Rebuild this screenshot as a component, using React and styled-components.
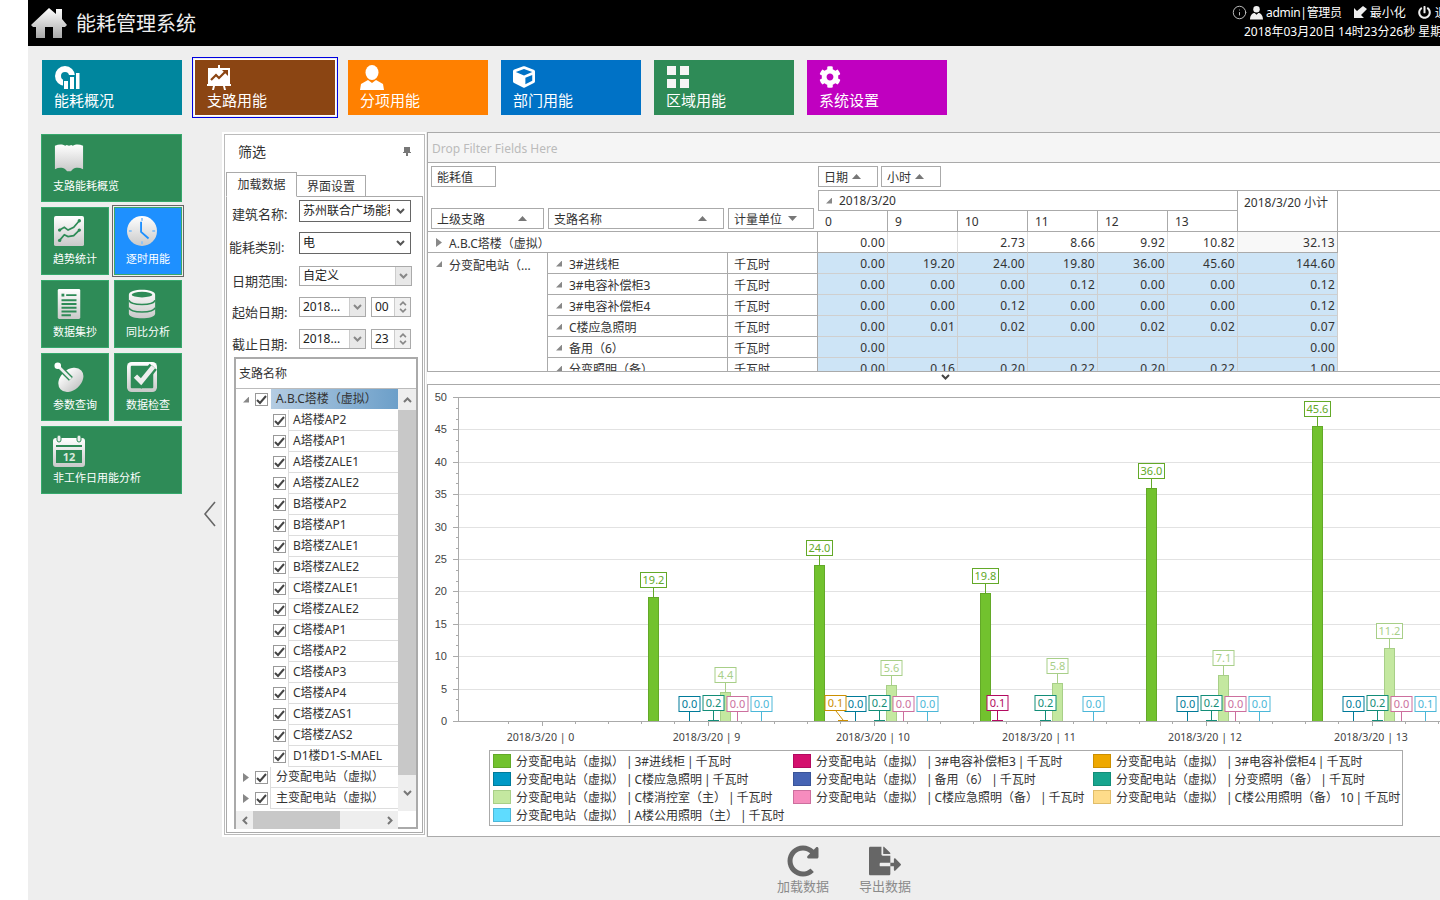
import React from 'react';
import styled, { createGlobalStyle, css } from 'styled-components';
import { FaCog, FaCube, FaRedoAlt, FaFileExport, FaPowerOff } from 'react-icons/fa';
import { Info } from 'lucide-react';

const FONT = '"Noto Sans", "Noto Sans CJK SC", sans-serif';
const TILE_GREEN = '#2e8b57';

const GlobalStyle = createGlobalStyle`
  html, body {
    margin: 0;
    width: 1440px;
    height: 900px;
    overflow: hidden;
    background: #fff;
    font-family: ${FONT};
  }
  * { box-sizing: border-box; }
`;

const Shell = styled.div`
  margin-left: 28px;
  width: 1444px;
  height: 900px;
  overflow: hidden;
  background: #eee;
`;

/* header */
const Header = styled.header`
  height: 46px;
  background: #000;
  display: flex;
  align-items: center;
  color: #fff;
`;

const HomeIcon = styled.svg`
  width: 36px;
  height: 32px;
  margin: 0 9px 0 3px;
`;

const AppTitle = styled.h1`
  margin: 0 0 2px;
  font-size: 20px;
  font-weight: 400;
  color: #eee;
`;

const HeaderRight = styled.div`
  margin-left: auto;
  width: 240px;
  height: 46px;
  font-size: 12px;
  white-space: nowrap;
`;

const UserLine = styled.div`
  display: flex;
  align-items: center;
  height: 23px;
  padding-top: 1px;
`;

const UserItem = styled.span`
  display: flex;
  align-items: center;
  gap: 3px;
  margin-right: ${p => p.$mr || 0}px;
`;

const UserName = styled.span`
  letter-spacing: -0.3px;
`;

const DateLine = styled.div`
  padding-left: 12px;
  line-height: 17px;
`;

/* top nav */
const Nav = styled.nav`
  display: flex;
  gap: 13px;
  padding: 14px 0 17px 14px;
`;

const NavTile = styled.div`
  width: 140px;
  height: 55px;
  padding: 5px 12px 0;
  background: ${p => p.$bg};
  color: #fff;
  font-size: 15px;
  line-height: 20px;
  ${p => p.$active && css`
    box-shadow: 0 0 0 1px #fff;
    outline: 1px solid #0000e0;
    outline-offset: 2px;
  `}
`;

const NavIcon = styled.div`
  height: 24px;
  display: flex;
  align-items: center;
  margin-bottom: 1px;
  font-size: 22px;
`;

/* body */
const Body = styled.div`
  display: flex;
  height: 768px;
  padding-left: 13px;
`;

const Sidebar = styled.aside`
  flex: none;
  margin-top: 2px;
  width: 141px;
  display: grid;
  grid-template-columns: 68px 68px;
  grid-auto-rows: 68px;
  gap: 5px;
`;

const SideTile = styled.div`
  grid-column: ${p => (p.$wide ? 'span 2' : 'auto')};
  display: flex;
  flex-direction: column;
  justify-content: space-between;
  padding: 8px 0 8px 11px;
  background: ${p => (p.$active ? '#1e90ff' : TILE_GREEN)};
  border: 1px solid #36a86c;
  color: #fff;
  font-size: 11px;
  line-height: 14px;
  ${p => p.$active && css`
    outline: 1px solid #666;
    outline-offset: 1px;
  `}
`;

const SideIcon = styled.svg`
  width: 30px;
  height: 30px;
  margin-left: 1px;
  display: block;
`;

const Handle = styled.div`
  flex: none;
  width: 40px;
  padding: 369px 0 0 21px;
`;

/* filter panel */
const FilterPanel = styled.section`
  flex: none;
  width: 204px;
  height: 705px;
  padding: 2px 1px 2px 2px;
  background: #fff;
`;

const FilterFrame = styled.div`
  height: 100%;
  border: 1px solid #bbb;
  display: flex;
  flex-direction: column;
`;

const FilterTitle = styled.div`
  flex: none;
  height: 36px;
  display: flex;
  align-items: center;
  justify-content: space-between;
  padding: 0 13px 4px 13px;
  font-size: 14px;
  color: #333;
`;

const TabBar = styled.div`
  flex: none;
  display: flex;
  align-items: flex-end;
  height: 25px;
  margin-left: 1px;
`;

const Tab = styled.div`
  height: ${p => (p.$active ? 25 : 22)}px;
  width: ${p => (p.$active ? 71 : 69)}px;
  margin-bottom: -1px;
  border: 1px solid #aaa;
  border-bottom-color: ${p => (p.$active ? '#fff' : '#aaa')};
  border-left-width: ${p => (p.$active ? 1 : 0)}px;
  background: #fff;
  position: relative;
  text-align: center;
  font-size: 12px;
  line-height: ${p => (p.$active ? 24 : 22)}px;
  color: #333;
`;

const TabBody = styled.div`
  flex: 1;
  margin: 0 1px 1px 1px;
  padding-top: 3px;
  border: 1px solid #aaa;
`;

const FormRow = styled.div`
  display: flex;
  align-items: flex-start;
  height: ${p => p.$h}px;
  margin-top: ${p => p.$top || 0}px;
`;

const FormLabel = styled.label`
  flex: none;
  width: 72px;
  margin-top: ${p => p.$drop || 5}px;
  padding-left: ${p => p.$indent}px;
  font-size: 13px;
  line-height: 20px;
  color: #333;
  white-space: nowrap;
`;

const Control = styled.div`
  flex: none;
  display: flex;
  width: ${p => p.$w}px;
  height: 100%;
  margin-left: ${p => p.$ml || 0}px;
  background: #fff;
  border: 1px solid ${p => (p.$dark ? '#666' : '#aaa')};
`;

const ControlText = styled.div`
  flex: 1;
  min-width: 0;
  overflow: hidden;
  white-space: nowrap;
  padding-left: 3px;
  font-size: 12px;
  line-height: ${p => (p.$dark ? 20 : 18)}px;
  color: #222;
`;

const ControlButton = styled.div`
  flex: none;
  width: ${p => p.$w}px;
  display: flex;
  flex-direction: column;
  align-items: center;
  justify-content: center;
  gap: 2px;
  background: ${p => p.$bg || 'transparent'};
  border-left: ${p => (p.$bg ? '1px solid #ccc' : 'none')};
`;

const Glyph = styled.svg`
  display: block;
  flex: none;
`;

const ListBox = styled.div`
  width: 184px;
  height: 472px;
  margin: 8px 0 0 7px;
  border: 2px solid #aaa;
`;

const ListHead = styled.div`
  height: 30px;
  padding-left: 3px;
  border-bottom: 1px solid #bbb;
  font-size: 12px;
  line-height: 29px;
  color: #333;
`;

const TreeArea = styled.div`
  display: flex;
  height: 422px;
`;

const TreeRows = styled.div`
  width: 162px;
  overflow: hidden;
`;

const TreeRow = styled.div`
  display: flex;
  align-items: center;
  height: 21px;
  padding-left: ${p => (p.$child ? 37 : 7)}px;
`;

const TreeText = styled.div`
  flex: 1;
  height: 21px;
  margin-left: 2px;
  padding-left: ${p => (p.$child ? 4 : 5)}px;
  border-left: 1px solid #ddd;
  border-bottom: 1px solid #ddd;
  font-size: 12px;
  line-height: 20px;
  color: #333;
  white-space: nowrap;
  ${p => p.$selected && css`
    background: linear-gradient(90deg, #b4cce2, #6c9fc9);
    border-color: #fff;
  `}
`;

const CheckBox = styled.span`
  flex: none;
  width: 13px;
  height: 13px;
  border: 1px solid #999;
  background: #fff;
  display: flex;
  align-items: center;
  justify-content: center;
`;

const VScroll = styled.div`
  width: 18px;
  display: flex;
  flex-direction: column;
  background: #eee;
`;

const ScrollArrow = styled.div`
  flex: none;
  width: ${p => (p.$w ? `${p.$w}px` : 'auto')};
  height: ${p => p.$h}px;
  display: flex;
  align-items: center;
  justify-content: center;
`;

const VThumb = styled.div`
  flex: none;
  height: 365px;
  background: #c8c8c8;
`;

const HScrollRow = styled.div`
  display: flex;
  height: 18px;
`;

const HScroll = styled.div`
  width: 162px;
  display: flex;
  align-items: center;
  background: #eee;
`;

const HThumb = styled.div`
  width: 87px;
  height: 100%;
  margin-right: auto;
  background: #c8c8c8;
`;

/* main column */
const Main = styled.main`
  flex: 1;
  min-width: 0;
  margin-left: 1px;
`;

const MainSheet = styled.div`
  height: 705px;
  background: #fff;
  display: flex;
  flex-direction: column;
`;

const Pivot = styled.section`
  flex: none;
  height: 240px;
  overflow: hidden;
  border-top: 1px solid #aaa;
  border-bottom: 1px solid #aaa;
  border-left: 1px solid #aaa;
`;

const DropBar = styled.div`
  height: 30px;
  padding-left: 4px;
  background: #f5f5f5;
  border-bottom: 1px solid #aaa;
  font-size: 12px;
  line-height: 31px;
  color: #bbb;
`;

const FieldRow = styled.div`
  display: flex;
  align-items: flex-start;
  height: 27px;
  padding: 3px 0 0 3px;
`;

const FieldButton = styled.div`
  flex: none;
  display: flex;
  align-items: center;
  justify-content: space-between;
  width: ${p => p.$w}px;
  height: ${p => p.$h || 21}px;
  margin-left: ${p => p.$ml || 0}px;
  padding: 0 ${p => (p.$plain ? 0 : 16)}px 0 5px;
  border: 1px solid #aaa;
  background: #fff;
  font-size: 12px;
  color: #333;
`;

const Sort = styled.i`
  width: 9px;
  height: 5px;
  background: #777;
  clip-path: ${p => (p.$down
    ? 'polygon(0 0, 100% 0, 50% 100%)'
    : 'polygon(50% 0, 100% 100%, 0 100%)')};
`;

const PivotGrid = styled.div`
  display: grid;
  grid-template-columns: 120px 180px 90px repeat(6, 70px) 100px 1fr;
  grid-auto-rows: 21px;
  font-size: 12px;
  color: #333;
`;

const Cell = styled.div`
  grid-column: ${p => p.$col || 'auto'};
  grid-row: ${p => p.$row || 'auto'};
  display: flex;
  align-items: ${p => p.$align || 'center'};
  justify-content: ${p => (p.$value ? 'flex-end' : 'flex-start')};
  gap: ${p => (p.$gap !== undefined ? p.$gap : 7)}px;
  padding: ${p => p.$pad || (p.$value ? '0 2px 0 0' : '1px 0 0 8px')};
  letter-spacing: ${p => (p.$value ? '0.25px' : 'normal')};
  background: ${p => p.$bg || 'transparent'};
  border-right: ${p => (p.$noRight ? 'none' : `1px solid ${p.$rightLine || p.$line || '#aaa'}`)};
  border-bottom: 1px solid ${p => p.$bottomLine || p.$line || '#aaa'};
  border-top: ${p => (p.$topLine ? '1px solid #aaa' : 'none')};
  border-left: ${p => (p.$leftLine ? '1px solid #aaa' : 'none')};
  white-space: nowrap;
  overflow: hidden;
`;

const Tri = styled.i`
  flex: none;
  width: 6px;
  height: ${p => (p.$closed ? 9 : 6)}px;
  margin: ${p => p.$m || 0};
  background: #888;
  clip-path: ${p => (p.$closed
    ? 'polygon(0 0, 100% 50%, 0 100%)'
    : 'polygon(100% 0, 100% 100%, 0 100%)')};
`;

const Splitter = styled.div`
  flex: none;
  height: 12px;
  padding: 0 0 2px 514px;
  display: flex;
  align-items: center;
`;

const ChartBox = styled.section`
  flex: none;
  height: 453px;
  border-top: 1px solid #aaa;
  border-bottom: 1px solid #aaa;
  border-left: 1px solid #aaa;
`;

const ChartSvg = styled.svg`
  display: block;
  width: 1012px;
  height: 365px;
  font-family: ${FONT};
`;

const Legend = styled.div`
  width: 914px;
  height: 76px;
  margin-left: 61px;
  padding: 1px 0 0 3px;
  border: 1px solid #aaa;
  display: grid;
  grid-template-columns: repeat(3, 300px);
  grid-auto-rows: 18px;
`;

const LegendItem = styled.div`
  display: flex;
  align-items: center;
  gap: 5px;
  font-size: 12px;
  word-spacing: -1.2px;
  color: #333;
  white-space: pre;
`;

const Swatch = styled.i`
  flex: none;
  width: 18px;
  height: 14px;
  background: ${p => p.$fill};
  border: 1px solid ${p => p.$edge};
`;

const Actions = styled.div`
  display: flex;
  gap: 30px;
  padding: 8px 0 0 350px;
`;

const ActionButton = styled.div`
  width: 52px;
  display: flex;
  flex-direction: column;
  align-items: center;
  font-size: 13px;
  line-height: 18px;
  color: #8a8a8a;
  svg { color: #666; display: block; }
`;

/* drawings */
const GradientDefs = styled.svg`
  position: absolute;
  width: 0;
  height: 0;
`;

const Fade = () => (
  <GradientDefs>
    <defs>
      <linearGradient id="fade" x1="0" y1="0" x2="0" y2="1">
        <stop offset="0" stopColor="#fff" />
        <stop offset="1" stopColor="#c9c9c9" />
      </linearGradient>
      <linearGradient id="homeFade" x1="0" y1="0" x2="0" y2="1">
        <stop offset="0" stopColor="#fff" />
        <stop offset="1" stopColor="#a9a9a9" />
      </linearGradient>
    </defs>
  </GradientDefs>
);

const F = 'url(#fade)';

const Home = () => (
  <HomeIcon viewBox="0 0 36 32">
    <path fill="url(#homeFade)" d="M18 1 25 7V2h6v10l5 6-2 2H31V31H22V20H14V31H5V20H2L0 18Z" />
  </HomeIcon>
);

const Chevron = ({ w = 9, h = 6, color = '#666', up }) => (
  <Glyph width={w} height={h} viewBox="0 0 9 6">
    <path d={up ? 'M1 5 4.5 1.5 8 5' : 'M1 1 4.5 4.5 8 1'} fill="none" stroke={color} strokeWidth="2" />
  </Glyph>
);

const Tick = () => (
  <Glyph width="11" height="10" viewBox="0 0 11 10">
    <path d="M1 5 4 8 10 1" fill="none" stroke="#444" strokeWidth="2" />
  </Glyph>
);

const OverviewIcon = () => (
  <svg width="26" height="24" viewBox="0 0 26 24">
    <path fill="#fff" fillRule="evenodd" d="M11 1a10 10 0 1 0 0 20 10 10 0 0 0 0-20Zm0 6a4 4 0 1 1 0 8 4 4 0 0 1 0-8Z" />
    <path fill="#00869e" d="M9 10h17v14H9z" />
    <path fill="#fff" d="M10 16h4v8h-4zM16 12h4v12h-4zM22 8h3.5v16H22z" />
  </svg>
);

const BoardIcon = () => (
  <svg width="24" height="25" viewBox="0 0 24 25">
    <path fill="#fff" d="M11 0h2v3h-2zM1 3h22v16H1zM0 19h24v2H0zM6 21h2l-1 4H5zM16 21h2l1 4h-2z" />
    <path fill="none" stroke="#8b4513" strokeWidth="2.2" d="M4 15 9 10l3 3 6-6" />
    <path fill="#8b4513" d="M15 5h6v6z" />
  </svg>
);

const PersonIcon = () => (
  <svg width="24" height="25" viewBox="0 0 24 25">
    <ellipse cx="12" cy="7.5" rx="6.5" ry="7.5" fill="#fff" />
    <path fill="#fff" d="M8 15 12 18l4-3 7 4 1 6H0l1-6Z" />
  </svg>
);

const GridIcon = () => (
  <svg width="24" height="24" viewBox="0 0 24 24" fill="#f5f5f5">
    <path d="M1 1h9v9H1zM14 1h9v9h-9zM1 14h9v9H1zM14 14h9v9h-9z" />
  </svg>
);

const MapIcon = () => (
  <SideIcon viewBox="0 0 32 32">
    <path fill={F} d="M1 3C5 1 9 1 12 3l1.5-1 2.5 1 2.5-1L20 3c3-2 7-2 11 0v25c-4-2-8-2-11 0l-2 2h-4l-2-2c-3-2-7-2-11 0Z" />
  </SideIcon>
);

const TrendIcon = () => (
  <SideIcon viewBox="0 0 32 32">
    <rect x="0" y="0" width="32" height="32" rx="2" fill={F} />
    <g fill="none" stroke={TILE_GREEN} strokeWidth="1.8">
      <path d="M6 15 11 12l4 3 6-3 6-7" />
      <path d="M6 26 11 20l4 2 6-1 6-6" />
    </g>
    <g fill={TILE_GREEN}>
      <circle cx="6" cy="15" r="1.8" /><circle cx="27" cy="5" r="1.8" />
      <circle cx="6" cy="26" r="1.8" /><circle cx="27" cy="15" r="1.8" />
    </g>
  </SideIcon>
);

const ClockIcon = () => (
  <SideIcon viewBox="0 0 32 32">
    <circle cx="16" cy="16" r="16" fill={F} />
    <path d="M15 2h2v3h-2zM15 27h2v3h-2zM2 15h3v2H2zM27 15h3v2h-3z" fill="#8fc4f5" />
    <path d="M15 6v11l8 7" fill="none" stroke="#1e90ff" strokeWidth="2" />
  </SideIcon>
);

const DocIcon = () => (
  <SideIcon viewBox="0 0 32 32" style={{ height: 32, marginTop: -1 }}>
    <rect x="4" y="0" width="24" height="32" rx="1.5" fill={F} />
    <g fill={TILE_GREEN}>
      <rect x="8" y="5" width="3" height="3" />
      <path d="M13 5.5h11v2H13zM8 11h16v2H8zM8 15h16v2H8zM8 19h16v2H8zM8 23h16v2H8zM8 27h10v2H8z" />
    </g>
  </SideIcon>
);

const DbIcon = () => (
  <SideIcon viewBox="0 0 32 32">
    <path fill={F} d="M2 6c0-7 28-7 28 0v20c0 7-28 7-28 0Z" />
    <ellipse cx="16" cy="6" rx="11" ry="3" fill={TILE_GREEN} />
    <g fill="none" stroke={TILE_GREEN} strokeWidth="1.6">
      <path d="M2 12c2 6 26 6 28 0M2 20c2 6 26 6 28 0" />
    </g>
  </SideIcon>
);

const ProbeIcon = () => (
  <SideIcon viewBox="0 0 32 32">
    <ellipse cx="18" cy="19" rx="15" ry="11" fill={F} transform="rotate(-42 18 19)" />
    <path d="M4 4 18 18" stroke={TILE_GREEN} strokeWidth="6" />
    <path d="M4 4 18 18" stroke="#eee" strokeWidth="3" />
    <circle cx="4" cy="4" r="3.5" fill="#fff" />
  </SideIcon>
);

const CheckIcon = () => (
  <SideIcon viewBox="0 0 32 32">
    <rect x="0" y="0" width="32" height="32" rx="5" fill={F} />
    <rect x="4" y="4" width="24" height="24" rx="1" fill={TILE_GREEN} />
    <path d="M9 15 15 21 28 5" fill="none" stroke={TILE_GREEN} strokeWidth="10" />
    <path d="M9 15 15 21 28 5" fill="none" stroke="#eee" strokeWidth="5" />
  </SideIcon>
);

const CalendarIcon = () => (
  <SideIcon viewBox="0 0 32 32" style={{ width: 32, height: 32, marginLeft: 0 }}>
    <rect x="0" y="3" width="32" height="29" rx="3" fill={F} />
    <rect x="4" y="0" width="4" height="7" rx="2" fill="#eee" stroke={TILE_GREEN} />
    <rect x="24" y="0" width="4" height="7" rx="2" fill="#eee" stroke={TILE_GREEN} />
    <rect x="3" y="10" width="26" height="2" fill={TILE_GREEN} />
    <rect x="3" y="15" width="26" height="13" fill={TILE_GREEN} />
    <text x="16" y="26" textAnchor="middle" fontSize="11" fontWeight="700" fill="#d8e8dc">12</text>
  </SideIcon>
);

/* data */
const navItems = [
  { label: '能耗概况', bg: '#00869e', icon: <OverviewIcon /> },
  { label: '支路用能', bg: '#8b4513', icon: <BoardIcon />, active: true },
  { label: '分项用能', bg: '#ff8000', icon: <PersonIcon /> },
  { label: '部门用能', bg: '#0072c6', icon: <FaCube /> },
  { label: '区域用能', bg: TILE_GREEN, icon: <GridIcon /> },
  { label: '系统设置', bg: '#c000c0', icon: <FaCog /> },
];

const sideItems = [
  { label: '支路能耗概览', icon: <MapIcon />, wide: true },
  { label: '趋势统计', icon: <TrendIcon /> },
  { label: '逐时用能', icon: <ClockIcon />, active: true },
  { label: '数据集抄', icon: <DocIcon /> },
  { label: '同比分析', icon: <DbIcon /> },
  { label: '参数查询', icon: <ProbeIcon /> },
  { label: '数据检查', icon: <CheckIcon /> },
  { label: '非工作日用能分析', icon: <CalendarIcon />, wide: true },
];

const meters = [
  'A塔楼AP2', 'A塔楼AP1', 'A塔楼ZALE1', 'A塔楼ZALE2', 'B塔楼AP2', 'B塔楼AP1',
  'B塔楼ZALE1', 'B塔楼ZALE2', 'C塔楼ZALE1', 'C塔楼ZALE2', 'C塔楼AP1', 'C塔楼AP2',
  'C塔楼AP3', 'C塔楼AP4', 'C塔楼ZAS1', 'C塔楼ZAS2', 'D1楼D1-S-MAEL',
];

const hours = ['0', '9', '10', '11', '12', '13'];

const topRow = ['0.00', '', '2.73', '8.66', '9.92', '10.82'];

const branches = [
  { name: '3#进线柜', vals: ['0.00', '19.20', '24.00', '19.80', '36.00', '45.60', '144.60'] },
  { name: '3#电容补偿柜3', vals: ['0.00', '0.00', '0.00', '0.12', '0.00', '0.00', '0.12'] },
  { name: '3#电容补偿柜4', vals: ['0.00', '0.00', '0.12', '0.00', '0.00', '0.00', '0.12'] },
  { name: 'C楼应急照明', vals: ['0.00', '0.01', '0.02', '0.00', '0.02', '0.02', '0.07'] },
  { name: '备用（6）', vals: ['0.00', '', '', '', '', '', '0.00'] },
  { name: '分变照明（备）', vals: ['0.00', '0.16', '0.20', '0.22', '0.20', '0.22', '1.00'] },
];

const C = {
  green: { fill: '#72c22e', edge: '#63a928', label: '#63a928' },
  light: { fill: '#c4e8a0', edge: '#a8cf88', label: '#a8cf88' },
  blue: '#007a99',
  teal: '#138d78',
  pink: '#cc6f9e',
  cyan: '#4cb7d8',
  orange: '#cc8f00',
  crimson: '#b30a60',
};

const legendItems = [
  ['3#进线柜 | 千瓦时', '#72c22e', '#63a928'],
  ['3#电容补偿柜3 | 千瓦时', '#d4106e', '#b30a60'],
  ['3#电容补偿柜4 | 千瓦时', '#eea800', '#cc8f00'],
  ['C楼应急照明 | 千瓦时', '#0099c6', '#007a99'],
  ['备用（6） | 千瓦时', '#4664b4', '#3a5498'],
  ['分变照明（备） | 千瓦时', '#17a58e', '#138d78'],
  ['C楼消控室（主） | 千瓦时', '#c4e8a0', '#a8cf88'],
  ['C楼应急照明（备） | 千瓦时', '#f68cbe', '#cc6f9e'],
  ['C楼公用照明（备） 10 | 千瓦时', '#fedc8a', '#e0bd6a'],
  ['A楼公用照明（主） | 千瓦时', '#5fdcff', '#4cb7d8'],
];

const Y0 = 721;
const UNIT = 6.48;

const bigBars = [
  { x: 648, v: 19.2, s: C.green }, { x: 814, v: 24, s: C.green }, { x: 980, v: 19.8, s: C.green },
  { x: 1146, v: 36, s: C.green }, { x: 1312, v: 45.6, s: C.green },
  { x: 720, v: 4.4, s: C.light }, { x: 886, v: 5.6, s: C.light }, { x: 1052, v: 5.8, s: C.light },
  { x: 1218, v: 7.1, s: C.light }, { x: 1384, v: 11.2, s: C.light },
];

const smallLabels = [
  [689.5, '0.0', C.blue], [713.5, '0.2', C.teal, true], [737.5, '0.0', C.pink], [761.5, '0.0', C.cyan],
  [855.5, '0.0', C.blue], [879.5, '0.2', C.teal, true], [903.5, '0.0', C.pink], [927.5, '0.0', C.cyan],
  [997.5, '0.1', C.crimson, true], [1045.5, '0.2', C.teal, true], [1093.5, '0.0', C.cyan],
  [1187.5, '0.0', C.blue], [1211.5, '0.2', C.teal, true], [1235.5, '0.0', C.pink], [1259.5, '0.0', C.cyan],
  [1353.5, '0.0', C.blue], [1377.5, '0.2', C.teal, true], [1401.5, '0.0', C.pink], [1425.5, '0.1', C.cyan],
];

const ValueTag = ({ cx, top, width, text, color }) => (
  <g>
    <rect x={cx - width / 2} y={top + 0.5} width={width} height={15} fill="#fff" stroke={color} />
    <text x={cx} y={top + 11.5} textAnchor="middle" fontSize="11" fill={color}>{text}</text>
  </g>
);

const Chart = () => {
  const yTicks = [];
  for (let v = 0; v <= 50; v += 5) {
    const y = Math.round(Y0 - v * UNIT) + 0.5;
    yTicks.push(
      <g key={v}>
        {v > 0 && v < 50 && <line x1="458" x2="1440" y1={y} y2={y} stroke="#e2e2e2" />}
        <line x1="453" x2="458" y1={y} y2={y} stroke="#aaa" />
        <text x="447" y={y + 3} textAnchor="end" fontSize="11" fill="#444" fontFamily="Liberation Sans">{v}</text>
        {v < 50 && [1, 2].map(i => {
          const my = Math.round(Y0 - (v + (i * 5) / 3) * UNIT) + 0.5;
          return <line key={i} x1="456" x2="458" y1={my} y2={my} stroke="#aaa" />;
        })}
      </g>
    );
  }
  const xTicks = [];
  for (let i = 0; i < 29; i++) {
    const x = Math.round(508.3 + i * 33.2) + 0.5;
    xTicks.push(<line key={i} x1={x} x2={x} y1={Y0} y2={i % 5 === 1 ? Y0 + 5 : Y0 + 3} stroke="#aaa" />);
  }
  const cats = [[540.5, '0'], [706.5, '9'], [873, '10'], [1039, '11'], [1205, '12'], [1371, '13']];

  return (
    <ChartSvg viewBox="428 385 1012 365">
      {yTicks}
      <line x1="458" x2="1440" y1="397.5" y2="397.5" stroke="#aaa" />
      <line x1="458.5" x2="458.5" y1="397" y2={Y0} stroke="#aaa" />
      {bigBars.map(b => {
        const top = Math.round(Y0 - b.v * UNIT);
        return <rect key={b.x} x={b.x + 0.5} y={top + 0.5} width="10" height={Y0 - top} fill={b.s.fill} stroke={b.s.edge} />;
      })}
      <line x1="458" x2="1440" y1={Y0 + 0.5} y2={Y0 + 0.5} stroke="#aaa" />
      {xTicks}
      {cats.map(([x, h]) => (
        <text key={h} x={x} y="741" textAnchor="middle" fontSize="10.6" fill="#444">{`2018/3/20 | ${h}`}</text>
      ))}
      {bigBars.map(b => {
        const top = Math.round(Y0 - b.v * UNIT);
        const cx = b.x + 5.5;
        return (
          <g key={b.x}>
            <line x1={cx} x2={cx} y1={top - 9} y2={top} stroke={b.s.label} />
            <ValueTag cx={cx} top={top - 25} width={b.v >= 10 ? 26 : 21} text={b.v.toFixed(1)} color={b.s.label} />
          </g>
        );
      })}
      {smallLabels.map(([cx, text, color, capped]) => {
        const top = capped ? 695 : 696;
        return (
          <g key={cx}>
            <line x1={cx} x2={cx} y1={top + 16} y2={capped ? 720 : Y0} stroke={color} />
            {capped && <line x1={cx - 5.5} x2={cx + 5.5} y1="720.5" y2="720.5" stroke={color} />}
            <ValueTag cx={cx} top={top} width={21} text={text} color={color} />
          </g>
        );
      })}
      <path d="M836 711 843 720M838 720.5h10" fill="none" stroke={C.orange} />
      <ValueTag cx={835.5} top={695} width={21} text="0.1" color={C.orange} />
    </ChartSvg>
  );
};

const TreeEntry = ({ label, child, selected, collapsed }) => (
  <TreeRow $child={child}>
    {!child && <Tri $closed={collapsed} $m="0 6px 0 0" />}
    <CheckBox><Tick /></CheckBox>
    <TreeText $selected={selected} $child={child}>{label}</TreeText>
  </TreeRow>
);

const DatePick = () => (
  <Control $w={67}>
    <ControlText>2018...</ControlText>
    <ControlButton $w={16} $bg="#e8e8e8"><Chevron color="#888" /></ControlButton>
  </Control>
);

const HourSpin = ({ value }) => (
  <Control $w={40} $ml={5}>
    <ControlText>{value}</ControlText>
    <ControlButton $w={16} $bg="#f0f0f0">
      <Chevron up w={8} h={5} color="#888" />
      <Chevron w={8} h={5} color="#888" />
    </ControlButton>
  </Control>
);

export default function App() {
  return (
    <>
      <GlobalStyle />
      <Fade />
      <Shell>
        <Header>
          <Home />
          <AppTitle>能耗管理系统</AppTitle>
          <HeaderRight>
            <UserLine>
              <UserItem $mr={3}><Info size={15} color="#bbb" strokeWidth={1.6} /></UserItem>
              <UserItem $mr={12}>
                <svg width="13" height="15" viewBox="0 0 14 15" fill="#eee">
                  <circle cx="7" cy="4" r="3.5" />
                  <path d="M0 15c0-5 3-7 5-7l2 2 2-2c2 0 5 2 5 7Z" />
                </svg>
                <UserName>admin|管理员</UserName>
              </UserItem>
              <UserItem $mr={12}>
                <svg width="13" height="13" viewBox="0 0 13 13" fill="#eee">
                  <path d="M13 3 7 9 10 12H0V2l3 3 6-5Z" />
                </svg>
                最小化
              </UserItem>
              <UserItem>
                <FaPowerOff size={13} color="#eee" style={{ marginRight: 1 }} />
                退出
              </UserItem>
            </UserLine>
            <DateLine>2018年03月20日 14时23分26秒 星期二</DateLine>
          </HeaderRight>
        </Header>

        <Nav>
          {navItems.map(item => (
            <NavTile key={item.label} $bg={item.bg} $active={item.active}>
              <NavIcon>{item.icon}</NavIcon>
              {item.label}
            </NavTile>
          ))}
        </Nav>

        <Body>
          <Sidebar>
            {sideItems.map(item => (
              <SideTile key={item.label} $wide={item.wide} $active={item.active}>
                {item.icon}
                <span>{item.label}</span>
              </SideTile>
            ))}
          </Sidebar>

          <Handle>
            <svg width="14" height="26" viewBox="0 0 14 26">
              <path d="M12 1 2 13l10 12" fill="none" stroke="#666" strokeWidth="1.6" />
            </svg>
          </Handle>

          <FilterPanel>
            <FilterFrame>
              <FilterTitle>
                筛选
                <svg width="8" height="9" viewBox="0 0 8 9" fill="#777">
                  <path d="M1 0h6v5h1v1H5v3H3V6H0V5h1Z" />
                </svg>
              </FilterTitle>
              <TabBar>
                <Tab $active>加载数据</Tab>
                <Tab>界面设置</Tab>
              </TabBar>
              <TabBody>
                <FormRow $h={22}>
                  <FormLabel $indent={5} $drop={4}>建筑名称:</FormLabel>
                  <Control $w={112} $dark>
                    <ControlText $dark>苏州联合广场能耗</ControlText>
                    <ControlButton $w={20}><Chevron color="#555" /></ControlButton>
                  </Control>
                </FormRow>
                <FormRow $h={22} $top={10}>
                  <FormLabel $indent={2}>能耗类别:</FormLabel>
                  <Control $w={112} $dark>
                    <ControlText $dark>电</ControlText>
                    <ControlButton $w={20}><Chevron color="#555" /></ControlButton>
                  </Control>
                </FormRow>
                <FormRow $h={20} $top={12}>
                  <FormLabel $indent={5}>日期范围:</FormLabel>
                  <Control $w={113}>
                    <ControlText>自定义</ControlText>
                    <ControlButton $w={16} $bg="#e8e8e8"><Chevron color="#888" /></ControlButton>
                  </Control>
                </FormRow>
                <FormRow $h={20} $top={11}>
                  <FormLabel $indent={5}>起始日期:</FormLabel>
                  <DatePick />
                  <HourSpin value="00" />
                </FormRow>
                <FormRow $h={20} $top={12}>
                  <FormLabel $indent={5}>截止日期:</FormLabel>
                  <DatePick />
                  <HourSpin value="23" />
                </FormRow>
                <ListBox>
                  <ListHead>支路名称</ListHead>
                  <TreeArea>
                    <TreeRows>
                      <TreeEntry label="A.B.C塔楼（虚拟）" selected />
                      {meters.map(m => <TreeEntry key={m} label={m} child />)}
                      <TreeEntry label="分变配电站（虚拟）" collapsed />
                      <TreeEntry label="主变配电站（虚拟）" collapsed />
                    </TreeRows>
                    <VScroll>
                      <ScrollArrow $h={21}><Chevron up color="#777" /></ScrollArrow>
                      <VThumb />
                      <ScrollArrow $h={36}><Chevron color="#777" /></ScrollArrow>
                    </VScroll>
                  </TreeArea>
                  <HScrollRow>
                    <HScroll>
                      <ScrollArrow $h={18} $w={17}>
                        <Glyph width="6" height="9" viewBox="0 0 6 9"><path d="M5 1 1.5 4.5 5 8" fill="none" stroke="#777" strokeWidth="2" /></Glyph>
                      </ScrollArrow>
                      <HThumb />
                      <ScrollArrow $h={18} $w={17}>
                        <Glyph width="6" height="9" viewBox="0 0 6 9"><path d="M1 1 4.5 4.5 1 8" fill="none" stroke="#777" strokeWidth="2" /></Glyph>
                      </ScrollArrow>
                    </HScroll>
                  </HScrollRow>
                </ListBox>
              </TabBody>
            </FilterFrame>
          </FilterPanel>

          <Main>
            <MainSheet>
              <Pivot>
                <DropBar>Drop Filter Fields Here</DropBar>
                <FieldRow>
                  <FieldButton $w={65} $plain>能耗值</FieldButton>
                  <FieldButton $w={60} $ml={322}>日期<Sort /></FieldButton>
                  <FieldButton $w={60} $ml={3}>小时<Sort /></FieldButton>
                </FieldRow>
                <PivotGrid>
                  <Cell $col="1 / span 3" $row="1 / span 2" $noRight $align="flex-end" $pad="0 0 2px 3px" $gap={4}>
                    <FieldButton $w={113}>上级支路<Sort /></FieldButton>
                    <FieldButton $w={176}>支路名称<Sort /></FieldButton>
                    <FieldButton $w={86}>计量单位<Sort $down /></FieldButton>
                  </Cell>
                  <Cell $col="4 / span 6" $topLine $leftLine $pad="0 0 0 7px"><Tri />2018/3/20</Cell>
                  <Cell $col="10" $row="1 / span 2" $topLine $align="flex-start" $pad="2px 0 0 6px">2018/3/20 小计</Cell>
                  <Cell $col="11" $row="1 / span 2" $topLine $noRight />
                  {hours.map((h, i) => (
                    <Cell key={h} $col={i + 4} $pad="0 0 0 7px">{h}</Cell>
                  ))}

                  <Cell $col="1 / span 3"><Tri $closed />A.B.C塔楼（虚拟）</Cell>
                  {topRow.map((v, i) => <Cell key={i} $value $line="#ddd" $bottomLine="#aaa">{v}</Cell>)}
                  <Cell $value $bg="#f8f8f8" $bottomLine="#aaa" $rightLine="#aaa">32.13</Cell>

                  <Cell $col="1" $row="span 6" $align="flex-start" $pad="3px 0 0 8px"><Tri $m="5px 0 0 0" />分变配电站（...</Cell>
                  {branches.map(b => (
                    <React.Fragment key={b.name}>
                      <Cell $col="2"><Tri />{b.name}</Cell>
                      <Cell $pad="1px 0 0 6px">千瓦时</Cell>
                      {b.vals.map((v, i) => <Cell key={i} $value $bg="#cde4f6" $line="#cfcfcf">{v}</Cell>)}
                    </React.Fragment>
                  ))}
                </PivotGrid>
              </Pivot>

              <Splitter><Chevron w={9} h={6} color="#444" /></Splitter>

              <ChartBox>
                <Chart />
                <Legend>
                  {legendItems.map(([text, fill, edge]) => (
                    <LegendItem key={text}>
                      <Swatch $fill={fill} $edge={edge} />
                      {`分变配电站（虚拟） | ${text}`}
                    </LegendItem>
                  ))}
                </Legend>
              </ChartBox>
            </MainSheet>

            <Actions>
              <ActionButton><FaRedoAlt size={32} />加载数据</ActionButton>
              <ActionButton><FaFileExport size={32} />导出数据</ActionButton>
            </Actions>
          </Main>
        </Body>
      </Shell>
    </>
  );
}
